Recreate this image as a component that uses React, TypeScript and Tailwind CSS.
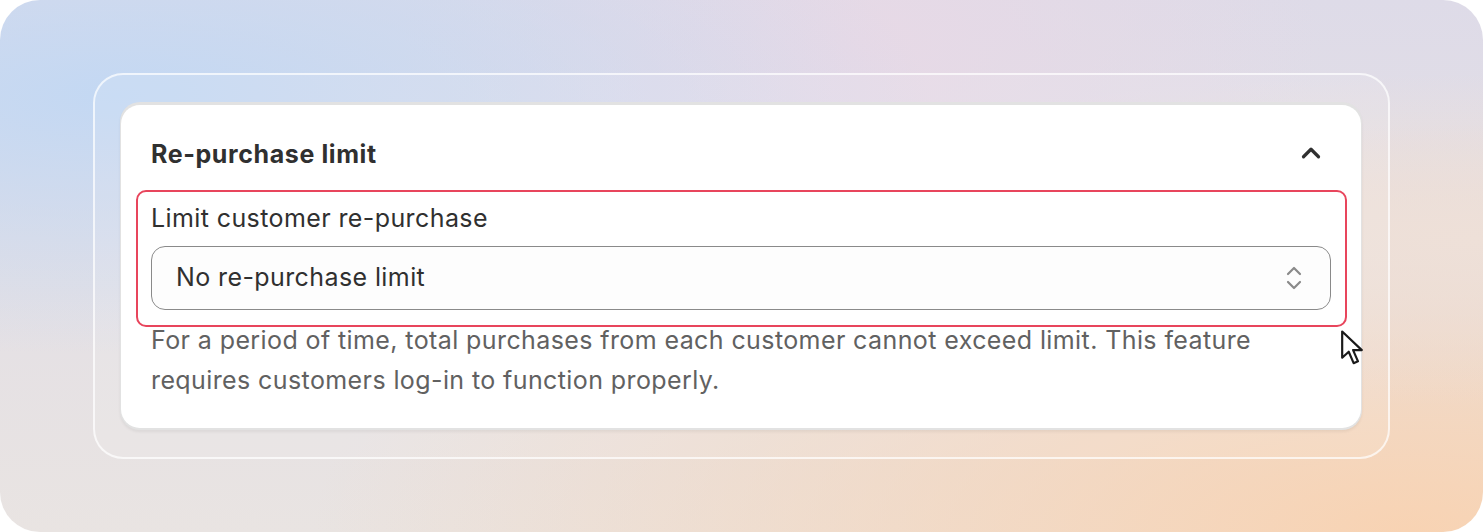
import { ChevronUp } from "lucide-react";

function SelectArrows() {
  return (
    <svg width="20" height="28" viewBox="0 0 20 28" fill="none" stroke="#8a8a8a" strokeWidth="2.2" strokeLinecap="round" strokeLinejoin="round">
      <path d="M4 10 L10 4 L16 10" />
      <path d="M4 18 L10 24 L16 18" />
    </svg>
  );
}

function Cursor() {
  return (
    <svg width="24" height="40" viewBox="0 0 22 36" className="absolute left-full top-full -ml-[5px] mt-[4px]">
      <path
        d="M2 2 L2 26 L8 20.5 L12.5 31 L16.5 29.3 L12 19 L20 19 Z"
        fill="#fff"
        stroke="#1a1a1a"
        strokeWidth="2"
        strokeLinejoin="round"
      />
    </svg>
  );
}

export default function App() {
  return (
    <div className="w-[1483px] h-[532px] bg-white" style={{ fontFamily: "Inter, 'Noto Sans', sans-serif" }}>
      <div className="w-full h-full rounded-[40px] pl-[93px] pr-[93px] pt-[73px] bg-[radial-gradient(ellipse_at_8%_18%,#c3d8f3_0%,rgba(195,216,243,0)_42%),radial-gradient(ellipse_at_58%_8%,#e7d9e6_0%,rgba(231,217,230,0)_38%),radial-gradient(ellipse_at_100%_45%,#eee0d8_0%,rgba(238,224,216,0)_40%),radial-gradient(ellipse_at_95%_100%,#f8d3b3_0%,rgba(248,211,179,0)_55%),linear-gradient(180deg,#dedbe8_0%,#e9e4e2_100%)]">
        <div className="h-[386px] rounded-[30px] border-2 border-white/70 bg-white/10 pl-[25px] pr-[26px] pt-[27px]">
          <div className="rounded-[20px] bg-[#e2e2e2] pt-[3px] pb-[2px] pl-[1px] pr-[1px] shadow-[0_2px_3px_rgba(0,0,0,0.06)]">
            <div className="relative rounded-[19px] bg-white px-[30px] pt-[33px] pb-[28px]">
              <div className="flex items-center justify-between">
                <h2 className="text-[25px] leading-[32px] font-bold tracking-[0.6px] text-[#303030]">Re-purchase limit</h2>
                <ChevronUp size={30} strokeWidth={2.6} color="#303030" className="mr-[5px] -mt-[2px]" />
              </div>

              <div className="relative mt-[32px]">
                <div className="pointer-events-none absolute -top-[12px] -bottom-[17px] -left-[15px] -right-[16px] rounded-[10px] border-[2.5px] border-[#e8455c]">
                  <Cursor />
                </div>
                <label className="block text-[25px] leading-[32px] tracking-[0.4px] text-[#303030]">Limit customer re-purchase</label>
                <div className="mt-[12px] flex h-[64px] items-center justify-between rounded-[14px] border border-[#8a8a8a] bg-[#fdfdfd] pl-[24px] pr-[26px]">
                  <span className="text-[25px] tracking-[0.4px] text-[#303030]">No re-purchase limit</span>
                  <SelectArrows />
                </div>
              </div>

              <p className="mt-[10px] text-[25px] leading-[40px] tracking-[0.4px] text-[#616161]">
                For a period of time, total purchases from each customer cannot exceed limit. This feature requires
                customers log-in to function properly.
              </p>
            </div>
          </div>
        </div>
      </div>
    </div>
  );
}
